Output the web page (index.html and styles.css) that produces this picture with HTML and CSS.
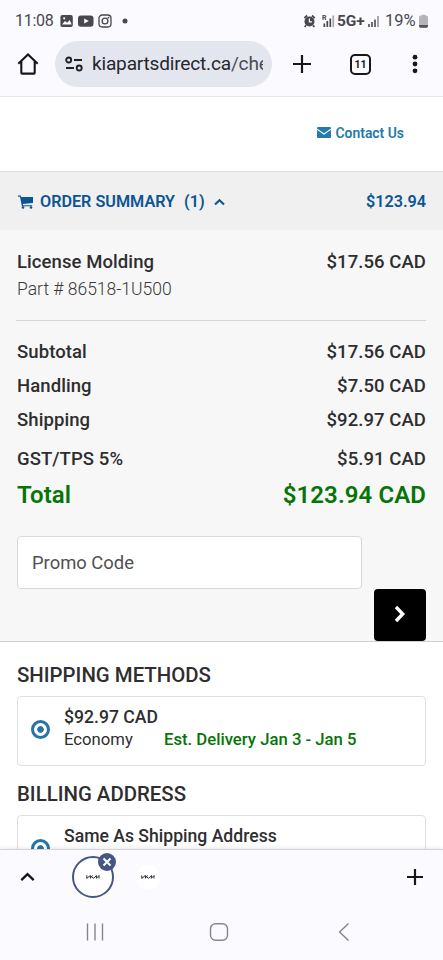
FILE: index.html
```html
<!DOCTYPE html>
<html lang="en">
<head>
<meta charset="utf-8">
<title>Checkout</title>
<link rel="stylesheet" href="styles.css">
</head>
<body>
<div class="phone">
  <header class="chrome">
    <div class="status">
      <span class="clock">11:08</span>
      <svg class="status-left" width="72" height="16" viewBox="0 0 72 16">
        <rect x="0.4" y="2" width="12.4" height="12" rx="2" fill="#48484e"/>
        <path d="M2 11.6 5 8l2.1 1.8L9.7 7l2 4.6z" fill="#fbfaff"/><circle cx="4.2" cy="5.3" r="1.1" fill="#fbfaff"/>
        <rect x="18" y="2.4" width="15.5" height="11.4" rx="3" fill="#48484e"/><path d="m24.2 5.6 4.6 2.5-4.6 2.5z" fill="#fbfaff"/>
        <g fill="none" stroke="#48484e" stroke-width="1.3"><rect x="39" y="2" width="12" height="12" rx="3.2"/><circle cx="45" cy="8" r="2.9"/></g>
        <circle cx="48.4" cy="4.7" r=".9" fill="#48484e"/>
        <circle cx="65" cy="8" r="2.5" fill="#48484e"/>
      </svg>
      <span class="grow"></span>
      <svg width="33" height="16" viewBox="0 0 33 16">
        <circle cx="5.500" cy="8.500" r="5" fill="#48484e"/><path d="M.4 5.200 3.100 2.500M10.700 5.200 8 2.500M2 12.200.7 14M9 12.200l1.300 1.800" stroke="#48484e" stroke-width="1.800"/>
        <path d="M5.400 5.500v3.300h2.700" fill="none" stroke="#fbfaff" stroke-width="1.200"/>
        <path d="M20.300 10.500V14M23.300 8v6M26.300 5.500V14" stroke="#48484e" stroke-width="1.700"/><path d="M29.300 2.500V14" stroke="#a5a5ab" stroke-width="1.700"/>
        <text x="18" y="7" class="roam">R</text>
      </svg>
      <span class="net">5G+</span>
      <svg class="bars" width="12" height="16" viewBox="0 0 12 16"><path d="M1 11v3M4 9v5M7 6.500V14" stroke="#55555b" stroke-width="1.700"/><path d="M10 3v11" stroke="#99999f" stroke-width="1.700"/></svg>
      <span class="pct">19%</span>
      <svg class="battery" width="9" height="14" viewBox="0 0 9 14"><path d="M2.600 1.500V.7h3.800v.8h.8Q9 1.500 9 3.300V12q0 1.700-1.800 1.700H1.800Q0 13.700 0 12V3.300Q0 1.500 1.800 1.500z" fill="#b4b4b9"/><path d="M0 11h9v1q0 1.700-1.800 1.700H1.800Q0 13.700 0 12z" fill="#55555b"/></svg>
    </div>
    <div class="toolbar">
      <svg class="home" width="22" height="24" viewBox="0 0 22 24"><path d="M1.300 11.800 11 2.400l9.700 9.400M4.300 9.400v11.300q0 .9.900.9h11.600q.9 0 .9-.9V9.400" fill="none" stroke="#17171b" stroke-width="2.100"/></svg>
      <div class="address">
        <svg width="18" height="16" viewBox="0 0 18 16"><g fill="none" stroke="#202126" stroke-width="1.900"><circle cx="3.700" cy="4" r="2.500"/><path d="M9 4h8M1 12h8"/><circle cx="14.200" cy="12" r="2.500"/></g></svg>
        <span class="url">kiapartsdirect.ca<span class="path">/che</span></span>
      </div>
      <svg class="plus" width="20" height="20" viewBox="0 0 20 20"><path d="M10 1v18M1 10h18" stroke="#17171b" stroke-width="2.200"/></svg>
      <span class="tabs">11</span>
      <svg class="dots" width="6" height="20" viewBox="0 0 6 20"><g fill="#17171b"><circle cx="3" cy="3.200" r="2.400"/><circle cx="3" cy="10" r="2.400"/><circle cx="3" cy="16.800" r="2.400"/></g></svg>
    </div>
  </header>

  <main class="page">
    <div class="contact">
      <svg width="14" height="11" viewBox="0 0 14 11"><rect width="14" height="11" rx="1" fill="#237ba8"/><path d="M0 2.200 7 7l7-4.800" fill="none" stroke="#fff" stroke-width="1.100"/></svg>
      <span>Contact Us</span>
    </div>
    <div class="order-bar">
      <svg class="cart" width="16" height="14" viewBox="0 0 16 14"><path d="M0 .6h2.700l.5 1.500H15v5.800L4.800 9l.3 1.200h9v1.100H3.900L2 1.800H0z" fill="#0c5595"/><circle cx="5" cy="12.500" r="1.300" fill="#0c5595"/><circle cx="13" cy="12.500" r="1.300" fill="#0c5595"/></svg>
      <span class="order-label">ORDER SUMMARY</span>
      <span class="order-count">(1)</span>
      <svg class="caret" width="11" height="8" viewBox="0 0 11 8"><path d="m1 6.500 4.500-4.300L10 6.500" fill="none" stroke="#0c5595" stroke-width="2.100"/></svg>
      <span class="grow"></span>
      <span class="order-total">$123.94</span>
    </div>
    <section class="summary">
      <div class="row item"><span class="item-name">License Molding</span><span>$17.56 CAD</span></div>
      <div class="part">Part # 86518-1U500</div>
      <hr>
      <div class="row"><span>Subtotal</span><span>$17.56 CAD</span></div>
      <div class="row"><span>Handling</span><span>$7.50 CAD</span></div>
      <div class="row"><span>Shipping</span><span>$92.97 CAD</span></div>
      <div class="row tax"><span>GST/TPS 5%</span><span>$5.91 CAD</span></div>
      <div class="row total"><span>Total</span><span>$123.94 CAD</span></div>
      <div class="promo">Promo Code</div>
      <div class="apply"><svg width="14" height="18" viewBox="0 0 14 18"><path d="m3 2 6.700 7L3 16" fill="none" stroke="#fff" stroke-width="3.400"/></svg></div>
    </section>
    <section class="options">
      <h2>SHIPPING METHODS</h2>
      <div class="card">
        <span class="radio"></span>
        <div class="card-body">
          <div class="price">$92.97 CAD</div>
          <div class="method"><span class="speed">Economy</span><span class="eta">Est. Delivery Jan 3 - Jan 5</span></div>
        </div>
      </div>
      <h2 class="billing">BILLING ADDRESS</h2>
      <div class="card">
        <span class="radio"></span>
        <div class="card-body"><div class="same">Same As Shipping Address</div></div>
      </div>
    </section>
  </main>

  <footer class="bottom">
    <div class="strip">
      <svg class="up" width="15" height="10" viewBox="0 0 15 10"><path d="m1.300 8.200 6.200-6 6.200 6" fill="none" stroke="#17171b" stroke-width="2.300"/></svg>
      <div class="tab active">
        <svg width="14" height="6" viewBox="0 0 14 6"><path d="M.8 1.300v3.200M.8 4.300l3.600-2.800v3M4.600 3.500l2.200-2M5.400 2.900 7.700 4.300 10.400 1.500v2.800L13 1.500v3" fill="none" stroke="#17171b" stroke-width=".9"/></svg>
        <span class="close"><svg width="10" height="10" viewBox="0 0 10 10"><path d="m1.500 1.500 7 7M8.500 1.500l-7 7" stroke="#fff" stroke-width="2"/></svg></span>
      </div>
      <div class="tab idle">
        <svg width="14" height="6" viewBox="0 0 14 6"><path d="M.8 1.300v3.200M.8 4.300l3.600-2.800v3M4.600 3.500l2.200-2M5.400 2.900 7.700 4.300 10.400 1.500v2.800L13 1.500v3" fill="none" stroke="#17171b" stroke-width=".9"/></svg>
      </div>
      <span class="grow"></span>
      <svg class="add" width="18" height="18" viewBox="0 0 18 18"><path d="M9 1v16M1 9h16" stroke="#17171b" stroke-width="2.200"/></svg>
    </div>
    <div class="nav">
      <svg width="18" height="20" viewBox="0 0 18 20"><path d="M1.500 1.500v17M9 1.500v17M16.500 1.500v17" stroke="#85858b" stroke-width="1.400"/></svg>
      <svg class="nav-home" width="20" height="20" viewBox="0 0 20 20"><rect x="1.500" y="1.700" width="17" height="16.600" rx="5" fill="none" stroke="#85858b" stroke-width="1.400"/></svg>
      <svg width="12" height="20" viewBox="0 0 12 20"><path d="M10.500 1.500 1.600 10l8.900 8.500" fill="none" stroke="#85858b" stroke-width="1.400"/></svg>
    </div>
  </footer>
</div>
</body>
</html>
```
FILE: styles.css
```css
* { box-sizing: border-box; }
body { margin: 0; font-family: Roboto, sans-serif; color: #2e2e30; background: #fff; }
svg { display: block; flex: none; }
.grow { flex: 1; }
.phone { width: 443px; height: 960px; display: flex; flex-direction: column; overflow: hidden; }

.chrome { flex: none; height: 97px; background: #fbfaff; border-bottom: 1px solid #e6e6ea; }
.status { height: 41px; padding: 0 15px 0 15px; display: flex; align-items: center; color: #48484e; white-space: nowrap; }
.clock { width: 45px; font-size: 16px; letter-spacing: -0.3px; }
.roam { font: bold 7px Roboto, sans-serif; fill: #48484e; }
.net { width: 31px; font-size: 15.5px; font-weight: 700; letter-spacing: -0.1px; }
.bars { margin-right: 5px; }
.pct { width: 33px; font-size: 16.5px; }
.battery { margin-left: 1px; }
.toolbar { height: 46px; padding-left: 17px; display: flex; align-items: center; }
.address { width: 217px; height: 46px; margin-left: 16px; padding: 0 9px 0 10px; border-radius: 23px; background: #e4e6ef; display: flex; align-items: center; gap: 9px; }
.url { flex: 1; overflow: hidden; white-space: nowrap; font-size: 19.1px; letter-spacing: -0.2px; line-height: 28px; color: #26272d; }
.path { color: #4b4c53; }
.plus { margin-left: 20px; }
.tabs { width: 21px; height: 21px; margin-left: 38px; border: 2px solid #17171b; border-radius: 5px; font-size: 10.5px; font-weight: 700; line-height: 17px; text-align: center; color: #17171b; }
.dots { margin-left: 41px; }

.page { flex: none; height: 752px; overflow: hidden; }
.contact { height: 74px; padding: 0 39px 3px 0; display: flex; align-items: center; justify-content: flex-end; gap: 5px; color: #237ba8; font-size: 13.9px; font-weight: 600; }
.order-bar { height: 59px; padding: 1px 17px 0 18px; border-top: 1px solid #dedede; background: #f0f0f0; color: #0c5595; font-size: 16.2px; font-weight: 600; display: flex; align-items: center; white-space: nowrap; }
.order-label { margin-left: 6px; width: 144px; }
.order-count { width: 21px; }
.caret { margin-left: 9px; }
.summary { height: 412px; padding: 16px 17px 0; background: #f7f7f7; border-bottom: 1px solid #cfcfcf; font-weight: 500; }
.row { display: flex; justify-content: space-between; font-size: 18.5px; line-height: 34px; letter-spacing: 0.08px; }
.item { line-height: 32px; }
.part { height: 27px; font-size: 17.5px; line-height: 23px; font-weight: 300; color: #39393b; }
hr { height: 1px; margin: 15px 0 14px -1px; border: 0; background: #d6d6d6; }
.tax { margin-top: 5px; }
.total { font-size: 24px; font-weight: 600; line-height: 38px; color: #077407; }
.promo { width: 345px; height: 53px; margin-top: 22px; padding-left: 14px; border: 1px solid #d9d9d9; border-radius: 4px; background: #fff; color: #505052; font-size: 18.4px; font-weight: 400; line-height: 51px; }
.apply { width: 52px; height: 52px; margin: 0 0 0 auto; padding-bottom: 2px; border-radius: 4px; background: #000; display: flex; align-items: center; justify-content: center; }
.options { padding: 21px 17px 0; }
h2 { margin: 0 0 9px; font-size: 20.4px; line-height: 24px; font-weight: 500; }
.card { height: 70px; padding: 9px 13px; border: 1px solid #dfdfdf; border-radius: 4px; display: flex; }
.radio { flex: none; width: 19px; height: 19px; margin: 14px 14px 0 0; border: 3px solid #2775a5; border-radius: 50%; background: radial-gradient(circle, #2775a5 0 2.9px, #fff 3.7px); }
.card-body { font-size: 17.6px; line-height: 23px; font-weight: 500; }
.method { display: flex; font-size: 16.7px; line-height: 21px; }
.speed { width: 100px; font-weight: 400; }
.eta { color: #077407; }
.billing { margin-top: 16px; }

.bottom { flex: none; height: 111px; background: #fbfaff; border-top: 1px solid #d4d4da; box-shadow: 0 -1px 4px #00000018; position: relative; }
.strip { height: 54px; padding: 0 19px 0 20px; display: flex; align-items: center; }
.tab { border-radius: 50%; display: flex; align-items: center; justify-content: center; }
.active { width: 42px; height: 42px; margin-left: 37px; border: 2px solid #465682; background: #fff; position: relative; }
.close { position: absolute; width: 18px; height: 18px; left: 24px; top: -5px; border-radius: 50%; background: #465682; display: flex; align-items: center; justify-content: center; }
.idle { width: 24px; height: 24px; margin-left: 22px; background: #fff; }
.nav { height: 55px; padding: 0 93px 0 86px; display: flex; justify-content: space-between; align-items: center; }
.nav-home { margin-right: 5px; }
```
